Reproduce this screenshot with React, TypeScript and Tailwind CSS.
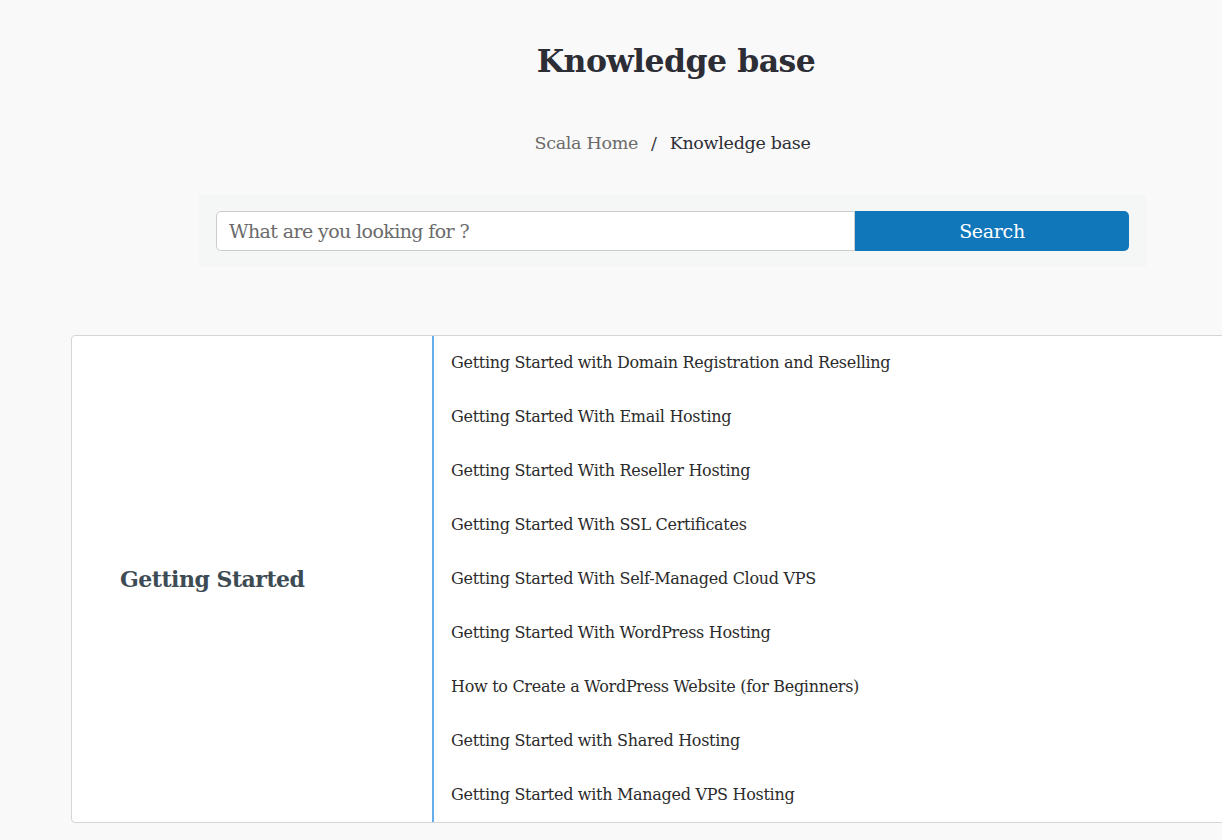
import React from "react";

const slab = { fontFamily: '"DejaVu Serif", "Liberation Serif", serif' };

const articles = [
  "Getting Started with Domain Registration and Reselling",
  "Getting Started With Email Hosting",
  "Getting Started With Reseller Hosting",
  "Getting Started With SSL Certificates",
  "Getting Started With Self-Managed Cloud VPS",
  "Getting Started With WordPress Hosting",
  "How to Create a WordPress Website (for Beginners)",
  "Getting Started with Shared Hosting",
  "Getting Started with Managed VPS Hosting",
];

export default function App() {
  return (
    <div className="w-[1222px] h-[840px] overflow-hidden bg-[#f9f9f9]" style={slab}>
      <div className="w-[1352px]">
        {/* page header */}
        <div className="flex flex-col items-center pt-[39px]">
          <h1 className="text-[31.5px] leading-[44px] font-bold text-[#2d2d36] tracking-[-0.5px]">
            Knowledge base
          </h1>
          <nav className="mt-[48px] mr-[7px] flex items-center text-[17.5px] leading-[24px] tracking-[-0.3px]">
            <a className="text-[#6b6b6b]">Scala Home</a>
            <span className="mx-[13px] text-[#333]">/</span>
            <span className="text-[#2d2d36]">Knowledge base</span>
          </nav>
        </div>

        {/* search */}
        <div className="ml-[199px] mt-[40px] w-[947px] bg-[#f5f7f7] px-[17px] py-[16px]">
          <form className="flex h-[40px]">
            <input
              placeholder="What are you looking for ?"
              className="flex-1 rounded-l-[5px] border border-[#cccccc] bg-white px-[12px] text-[19px] tracking-[-0.6px] text-[#333] placeholder:text-[#6b6b6b] outline-none"
            />
            <button
              type="button"
              className="w-[274px] rounded-r-[5px] bg-[#1077bb] text-[19px] text-white tracking-[-0.3px]"
            >
              Search
            </button>
          </form>
        </div>

        {/* category card */}
        <div className="ml-[71px] mt-[68px] w-[1210px] flex rounded-[4px] border border-[#d5d5d5] bg-white">
          <div className="w-[360px] flex items-center pl-[48px]">
            <h2 className="text-[22px] font-bold text-[#3d4c54] tracking-[-0.5px]">Getting Started</h2>
          </div>
          <ul className="flex-1 border-l-2 border-[#66aee9] pl-[17px]">
            {articles.map((t) => (
              <li key={t} className="h-[54px] flex items-center text-[16px] text-[#2b2b2b] tracking-[-0.3px]">
                <a>{t}</a>
              </li>
            ))}
          </ul>
        </div>
      </div>
    </div>
  );
}
